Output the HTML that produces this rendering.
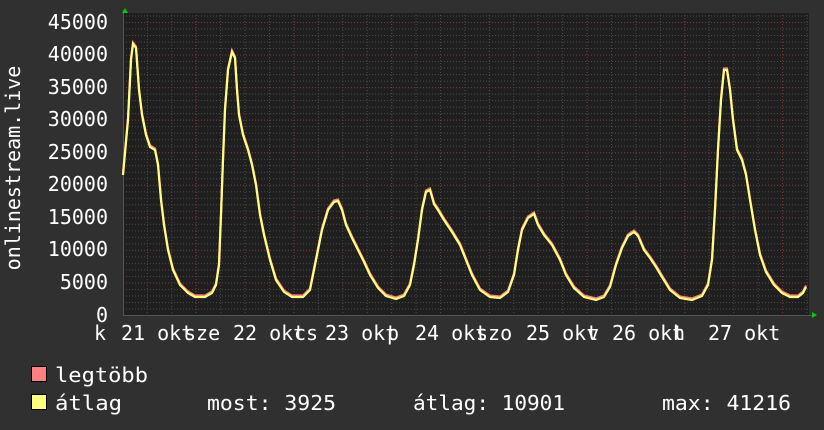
<!DOCTYPE html>
<html><head><meta charset="utf-8"><style>
html,body{margin:0;padding:0;background:#303030;}
svg{display:block}
text{font-family:"DejaVu Sans Mono","Liberation Mono",monospace;fill:#fff}
</style></head><body>
<svg width="824" height="430" xmlns="http://www.w3.org/2000/svg">
<defs>
<pattern id="hmin" patternUnits="userSpaceOnUse" x="0" y="315" width="3" height="6.511"><rect x="0" y="0" width="1" height="1" fill="#4a4a4a"/></pattern>
<pattern id="hmaj" patternUnits="userSpaceOnUse" x="0" y="315" width="3" height="32.555"><rect x="0" y="0" width="1" height="1" fill="#7a3535"/></pattern>
<pattern id="vmin" patternUnits="userSpaceOnUse" x="195.7" y="0" width="24.43" height="3"><rect x="0" y="0" width="1" height="1" fill="#4a4a4a"/></pattern>
<pattern id="vmaj" patternUnits="userSpaceOnUse" x="195.7" y="0" width="97.72" height="3"><rect x="0" y="0" width="1" height="1" fill="#7a3535"/></pattern>
</defs>
<rect width="824" height="430" fill="#303030"/>
<rect x="123" y="13" width="686" height="303" fill="#1f1f1f"/>
<rect x="124" y="13" width="685" height="303" fill="url(#hmin)"/>
<rect x="124" y="13" width="685" height="303" fill="url(#vmin)"/>
<rect x="124" y="13" width="685" height="303" fill="url(#hmaj)"/>
<rect x="124" y="13" width="685" height="303" fill="url(#vmaj)"/>
<line x1="123" x2="812" y1="315.5" y2="315.5" stroke="#555"/>
<line x1="123.5" x2="123.5" y1="10" y2="316" stroke="#555"/>
<polygon points="122,13 128,13 125,8" fill="#00cc00"/>
<polygon points="812,312 812,318 817,315" fill="#00cc00"/>
<g font-size="20" text-anchor="end">
<text x="108" y="29">45000</text><text x="108" y="61">40000</text><text x="108" y="94">35000</text>
<text x="108" y="126">30000</text><text x="108" y="159">25000</text><text x="108" y="191">20000</text>
<text x="108" y="224">15000</text><text x="108" y="256">10000</text><text x="108" y="289">5000</text>
<text x="108" y="322">0</text>
</g>
<text transform="translate(20,168) rotate(-90)" font-size="20" text-anchor="middle">onlinestream.live</text>
<g font-size="20">
<text x="94" y="340">k</text>
<text x="121" y="340">21 okt</text><text x="184" y="340">sze</text>
<text x="233" y="340">22 okt</text><text x="294" y="340">cs</text>
<text x="325" y="340">23 okt</text><text x="387" y="340">p</text>
<text x="415" y="340">24 okt</text><text x="476" y="340">szo</text>
<text x="526" y="340">25 okt</text><text x="587" y="340">v</text>
<text x="612" y="340">26 okt</text><text x="673" y="340">h</text>
<text x="708" y="340">27 okt</text>
</g>
<path transform="translate(0,-1.5)" fill="none" stroke="#ff8080" stroke-width="2.2" d="M123,175 128,120 131,60 133,44 136,48 139,90 142,115 146,135 150,147 155,150 158,165 161,200 164,225 168,250 173,270 180,285 188,293 195,297 205,297 212,293 216,285 219,265 221,215 223,160 225,110 228,70 232,52 235,58 237,90 239,115 243,135 248,150 252,165 256,185 260,215 264,235 270,260 276,280 284,292 292,297 303,297 310,290 314,270 318,250 322,230 328,210 334,202 338,201 342,210 346,225 352,238 358,250 364,262 370,275 378,288 386,296 396,299 404,296 410,285 414,265 418,240 422,210 426,192 430,190 434,204 438,210 444,220 452,232 460,245 466,260 472,275 480,290 490,297 500,298 508,292 514,275 518,250 522,230 528,218 534,214 538,225 544,235 552,245 560,260 566,275 574,288 584,297 596,300 604,297 610,287 616,265 622,248 628,236 634,232 638,236 644,250 650,258 656,267 662,277 670,290 680,298 692,300 702,296 708,285 712,260 715,210 718,150 721,100 724,70 727,70 730,90 733,120 737,150 742,160 746,175 750,200 755,230 760,255 766,272 774,285 782,293 790,297 798,297 803,293 806,287"/>
<path fill="none" stroke="#ffff80" stroke-width="2.2" d="M123,175 128,120 131,60 133,44 136,48 139,90 142,115 146,135 150,147 155,150 158,165 161,200 164,225 168,250 173,270 180,285 188,293 195,297 205,297 212,293 216,285 219,265 221,215 223,160 225,110 228,70 232,52 235,58 237,90 239,115 243,135 248,150 252,165 256,185 260,215 264,235 270,260 276,280 284,292 292,297 303,297 310,290 314,270 318,250 322,230 328,210 334,202 338,201 342,210 346,225 352,238 358,250 364,262 370,275 378,288 386,296 396,299 404,296 410,285 414,265 418,240 422,210 426,192 430,190 434,204 438,210 444,220 452,232 460,245 466,260 472,275 480,290 490,297 500,298 508,292 514,275 518,250 522,230 528,218 534,214 538,225 544,235 552,245 560,260 566,275 574,288 584,297 596,300 604,297 610,287 616,265 622,248 628,236 634,232 638,236 644,250 650,258 656,267 662,277 670,290 680,298 692,300 702,296 708,285 712,260 715,210 718,150 721,100 724,70 727,70 730,90 733,120 737,150 742,160 746,175 750,200 755,230 760,255 766,272 774,285 782,293 790,297 798,297 803,293 806,287"/>
<rect x="31.5" y="366.5" width="15" height="15" fill="#ff8080" stroke="#000"/>
<rect x="31.5" y="394.5" width="15" height="15" fill="#ffff80" stroke="#000"/>
<g font-size="20">
<text x="55" y="382" textLength="93" lengthAdjust="spacingAndGlyphs">legtöbb</text>
<text x="55" y="410" textLength="67" lengthAdjust="spacingAndGlyphs">átlag</text>
<text x="207" y="410" textLength="129" lengthAdjust="spacingAndGlyphs">most: 3925</text>
<text x="413" y="410" textLength="152" lengthAdjust="spacingAndGlyphs">átlag: 10901</text>
<text x="662" y="410" textLength="129" lengthAdjust="spacingAndGlyphs">max: 41216</text>
</g>
</svg>
</body></html>
